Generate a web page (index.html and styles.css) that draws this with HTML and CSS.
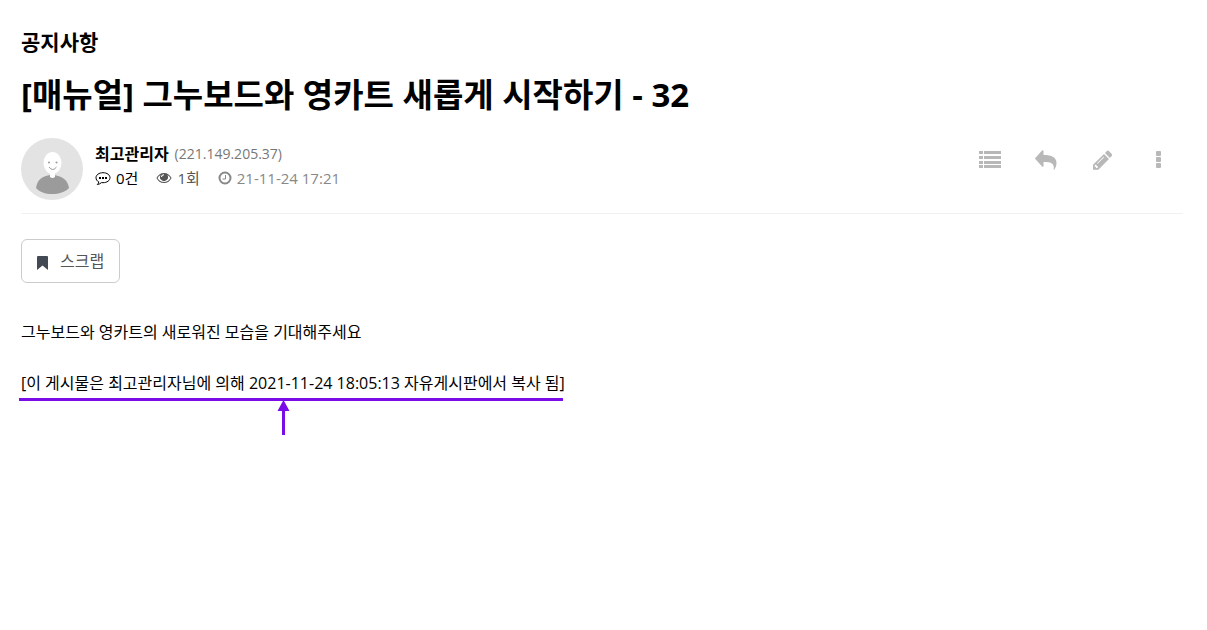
FILE: index.html
```
<!DOCTYPE html>
<html lang="ko">
<head>
  <meta charset="utf-8">
  <title>[매뉴얼] 그누보드와 영카트 새롭게 시작하기 - 32</title>
  <link rel="stylesheet" href="styles.css">
</head>
<body>
  <article class="view">
    <header>
      <h2 class="board-name">공지사항</h2>
      <h1 class="view-title">[매뉴얼] 그누보드와 영카트 새롭게 시작하기 - 32</h1>
    </header>

    <!-- Writer info and post buttons -->
    <section class="view-info">
      <svg class="avatar" viewBox="0 0 62 62" aria-hidden="true">
        <circle cx="31" cy="31" r="31" fill="#e3e3e3"/>
        <path d="M15 50c1-8 7-13 16-13s16 5 17 13c-4 4-10 6-17 6s-12-2-16-6z" fill="#9b9b9b"/>
        <path d="M29 32h5v7q-2.500 2-5 0z" fill="#fff"/>
        <ellipse cx="31.500" cy="25" rx="9" ry="11" fill="#fff"/>
        <circle cx="28" cy="24.500" r="1" fill="#999"/>
        <circle cx="35.500" cy="24.500" r="1" fill="#999"/>
        <path d="M28 29q3.700 5 7.500 0" fill="none" stroke="#999"/>
      </svg>
      <div class="profile">
        <div class="line writer"><strong>최고관리자</strong> <span class="ip">(221.149.205.37)</span></div>
        <div class="line meta">
          <a class="meta-item comment" href="#comments">
            <svg width="16" height="16" viewBox="0 0 16 16" aria-hidden="true">
              <path d="M8 2.700c4 0 7 2.200 7 5s-3 5-7 5l-1.500-.1C5.500 13.600 4 14.300 2.300 14.500c.9-.8 1.400-1.500 1.500-2.600C2 11 1 9.500 1 7.700c0-2.800 3-5 7-5z" fill="none" stroke="currentColor"/>
              <path d="M4 7h2v2H4zM7 7h2v2H7zM10 7h2v2h-2z" fill="currentColor"/>
            </svg>
            <span>0건</span>
          </a>
          <span class="meta-item hit">
            <svg width="16" height="16" viewBox="0 0 16 16" aria-hidden="true">
              <path fill-rule="evenodd" d="M8 3C4.500 3 2 5 .4 8 2 11 4.500 13 8 13s6-2 7.600-5C14 5 11.500 3 8 3zM4.600 4.900a4 4 0 1 0 6.800 0C12.700 5.600 13.700 6.700 14.500 8c-1.500 2.500-3.700 4-6.500 4S3 10.500 1.500 8c.8-1.300 1.800-2.400 3.100-3.100zM8 4.200v1A2 2 0 0 0 6 7H5c0-1.600 1.300-2.800 3-2.800z" fill="currentColor"/>
            </svg>
            <span>1회</span>
          </span>
          <span class="meta-item date">
            <svg width="14" height="14" viewBox="0 0 14 14" aria-hidden="true">
              <circle cx="7" cy="7" r="5.500" fill="none" stroke="currentColor" stroke-width="2"/>
              <path d="M7.500 4v4H4.500" fill="none" stroke="currentColor"/>
            </svg>
            <time datetime="2021-11-24T17:21">21-11-24 17:21</time>
          </span>
        </div>
      </div>
      <nav class="tools">
        <a href="#list" aria-label="목록">
          <svg width="22" height="18" viewBox="0 0 22 18"><path d="M0 0h4v3H0zM5 0h17v3H5zM0 5h4v3H0zM5 5h17v3H5zM0 10h4v3H0zM5 10h17v3H5zM0 14h4v3H0zM5 14h17v3H5z"/></svg>
        </a>
        <a href="#reply" aria-label="답변">
          <svg width="22" height="20" viewBox="0 0 22 20"><path d="M8.500 1v4c8.500 0 13 2.500 13 8 0 2.500-.8 4.500-2.200 6.800-.3.300-.6.100-.6-.2.700-6.100-1.700-7.600-10.200-7.600v4c0 .8-.8 1-1.400.5L.5 9.300q-.6-.8 0-1.500L7.100.600C7.700 0 8.500.300 8.500 1z"/></svg>
        </a>
        <button type="button" aria-label="수정">
          <svg width="20" height="20" viewBox="0 0 20 20"><path fill-rule="evenodd" d="M12 4l5 5L6.300 19.700H1v-5zM2.700 15.500v1.300h1.200v1.200h1.300l1-1-2.600-2.600zM11.500 6.700L5 13.200l.6.600 6.500-6.500zM13 3l1.900-1.900q1-1 2 0l2.800 2.800q1 1 0 2L17.900 7.900z"/></svg>
        </button>
        <button type="button" aria-label="게시판 옵션">
          <svg width="5" height="18" viewBox="0 0 5 18"><rect width="5" height="5" rx="1"/><rect y="6" width="5" height="5" rx="1"/><rect y="12" width="5" height="5" rx="1"/></svg>
        </button>
      </nav>
    </section>

    <section class="view-body">
      <a class="scrap" href="#scrap">
        <svg width="11" height="18" viewBox="0 0 11 18" aria-hidden="true"><path d="M1 4h9q1 0 1 1v13L5.500 13.500 0 18V5q0-1 1-1z"/></svg>
        스크랩
      </a>
      <p>그누보드와 영카트의 새로워진 모습을 기대해주세요</p>
      <p class="copy-log">
        [이 게시물은 최고관리자님에 의해 2021-11-24 18:05:13 자유게시판에서 복사 됨]
        <svg class="mark" width="545" height="38" viewBox="0 0 545 38" aria-hidden="true">
          <path d="M1 0h544v3H1zM265.500 2l6 11h-4.500v24h-3V13h-4.500z"/>
        </svg>
      </p>
    </section>
  </article>
</body>
</html>
```
FILE: styles.css
```
body {
  margin: 0;
  background: #fff;
  color: #000;
  font-family: "Open Sans", "Noto Sans CJK KR", sans-serif;
  font-size: 15px;
  line-height: 24px;
}

a {
  color: inherit;
  text-decoration: none;
}

svg {
  flex: none;
  display: block;
}

.view {
  padding: 28px 24px 28px 21px;
}

.board-name {
  margin: 0;
  font-size: 21px;
  line-height: 28px;
}

.view-title {
  margin: 16px 0 20px;
  font-size: 33px;
  line-height: 46px;
}

.view-info {
  display: flex;
  align-items: flex-start;
  padding-bottom: 13px;
  border-bottom: 1px solid #f1f1f1;
}

.avatar {
  width: 62px;
  height: 62px;
}

.profile {
  flex: 1;
  margin: 4px 0 0 12px;
}

.line {
  line-height: 24px;
}

.writer {
  display: flex;
  gap: 6px;
}

.writer strong {
  font-size: 16px;
}

.ip {
  color: #777;
  font-size: 14px;
}

.meta {
  display: flex;
  gap: 18px;
}

.meta-item {
  display: flex;
  align-items: center;
  gap: 5px;
}

.hit {
  color: #555;
}

.date {
  color: #888;
}

.tools {
  display: flex;
  margin-right: -3px;
}

.tools a,
.tools button {
  display: flex;
  align-items: center;
  justify-content: center;
  width: 56px;
  height: 44px;
  padding: 0;
  border: 0;
  background: none;
}

.tools svg {
  fill: #b8b8b8;
}

.scrap {
  display: inline-flex;
  align-items: center;
  gap: 12px;
  height: 42px;
  margin: 25px 0 37px;
  padding: 0 15px;
  border: 1px solid #ccc;
  border-radius: 6px;
  color: #555;
  font-size: 16px;
}

.scrap svg {
  fill: #434a54;
}

.view-body p {
  margin: 0 0 27px;
  font-size: 16px;
}

.view-body .copy-log {
  position: relative;
}

.mark {
  position: absolute;
  top: 27px;
  left: -3px;
  fill: #7a0ce8;
}
```
